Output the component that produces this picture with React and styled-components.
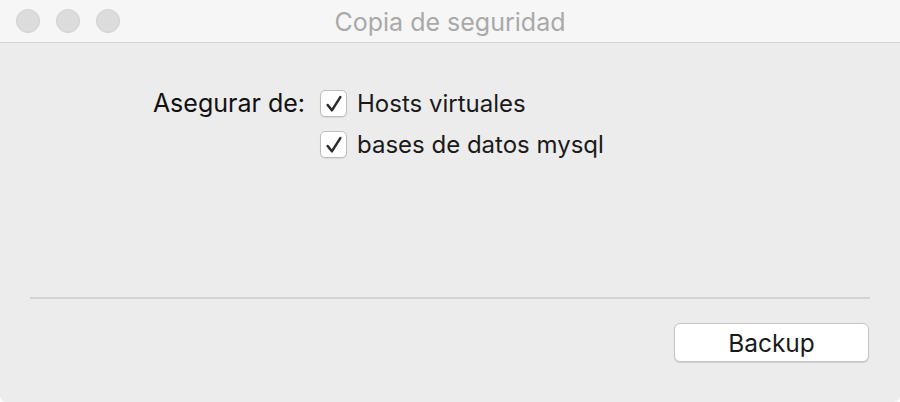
import React from "react"
import styled, { createGlobalStyle } from "styled-components"

const GlobalStyle = createGlobalStyle`
  html, body {
    margin: 0;
    padding: 0;
    background: #ffffff;
  }
  * {
    box-sizing: border-box;
  }
`

const Window = styled.div`
  width: 900px;
  height: 402px;
  display: flex;
  flex-direction: column;
  background: #ececec;
  border-radius: 0 0 6px 6px;
  overflow: hidden;
  font-family: "Inter", "Liberation Sans", sans-serif;
`

const TitleBar = styled.div`
  height: 43px;
  display: flex;
  align-items: center;
  position: relative;
  background: #f6f6f6;
  border-bottom: 1px solid #d4d4d4;
  padding-left: 16px;
`

const Lights = styled.div`
  display: flex;
  gap: 16px;
`

const Light = styled.span`
  width: 24px;
  height: 24px;
  border-radius: 50%;
  background: #dcdcdc;
  border: 1px solid #d1d1d1;
`

const Title = styled.div`
  position: absolute;
  left: 0;
  right: 0;
  top: 2px;
  bottom: 0;
  display: flex;
  align-items: center;
  justify-content: center;
  font-size: 25px;
  color: #a9a9a9;
  pointer-events: none;
`

const Content = styled.div`
  flex: 1;
  display: flex;
  flex-direction: column;
  padding: 0 30px;
`

const Form = styled.div`
  display: grid;
  grid-template-columns: 275px auto;
  column-gap: 15px;
  row-gap: 14px;
  padding-top: 47px;
  height: 254px;
  align-content: start;
`

const Label = styled.div`
  grid-column: 1;
  justify-self: end;
  align-self: center;
  font-size: 25px;
  line-height: 27px;
  color: #111111;
`

const Option = styled.label`
  grid-column: 2;
  display: flex;
  align-items: center;
  gap: 10px;
  font-size: 24px;
  line-height: 27px;
  color: #1a1a1a;
`

const Box = styled.span`
  width: 27px;
  height: 27px;
  border-radius: 5px;
  background: #ffffff;
  border: 1px solid #bdbdbd;
  box-shadow: 0 1px 1px rgba(0, 0, 0, 0.08);
  display: flex;
  align-items: center;
  justify-content: center;
`

const Separator = styled.div`
  height: 2px;
  background: #d3d3d3;
`

const Footer = styled.div`
  display: flex;
  justify-content: flex-end;
  padding-top: 24px;
  padding-right: 1px;
`

const Button = styled.button`
  width: 195px;
  height: 39px;
  background: #ffffff;
  border: 1px solid #c4c4c4;
  border-radius: 6px;
  box-shadow: 0 1px 1px rgba(0, 0, 0, 0.12);
  font-family: inherit;
  font-size: 24.5px;
  color: #1a1a1a;
  padding: 0;
`

const Check = () => (
  <svg width="20" height="20" viewBox="0 0 19 19">
    <path
      d="M3.5 10.5 L7.5 15.5 L15.5 3"
      fill="none"
      stroke="#2b2b2b"
      strokeWidth="2.4"
      strokeLinecap="round"
      strokeLinejoin="round"
    />
  </svg>
)

const Checkbox = ({ children }) => (
  <Option>
    <Box>
      <Check />
    </Box>
    {children}
  </Option>
)

export default function App() {
  return (
    <>
      <GlobalStyle />
      <Window>
        <TitleBar>
          <Lights>
            <Light />
            <Light />
            <Light />
          </Lights>
          <Title>Copia de seguridad</Title>
        </TitleBar>
        <Content>
          <Form>
            <Label>Asegurar de:</Label>
            <Checkbox>Hosts virtuales</Checkbox>
            <Checkbox>bases de datos mysql</Checkbox>
          </Form>
          <Separator />
          <Footer>
            <Button>Backup</Button>
          </Footer>
        </Content>
      </Window>
    </>
  )
}
